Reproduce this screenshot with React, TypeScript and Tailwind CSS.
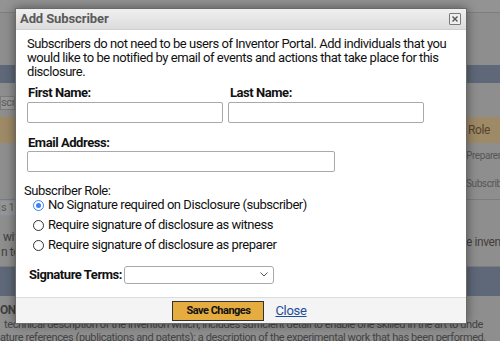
import React from "react";

const font = { fontFamily: "Roboto, 'Liberation Sans', Arial, sans-serif" };

const roles = [
  "No Signature required on Disclosure (subscriber)",
  "Require signature of disclosure as witness",
  "Require signature of disclosure as preparer",
];

const BackgroundPage: React.FC = () => (
  <div className="absolute inset-0 bg-[#8e8e8e] text-[#3f3f3f] text-[11px] tracking-[-0.4px] overflow-hidden">
    <div className="h-[13px] bg-[#939393] border-b border-[#7e7e7e]" />
    <div className="h-[18px] mt-[52px] bg-[#5e6879]" />
    <div className="mt-[13px] h-[14px] w-[15px] bg-[#999999] border border-[#7b7b7b] leading-[12px] text-[#5e5e5e] overflow-hidden">
      scri
    </div>
    <div className="mt-[7px] h-[26px] bg-[#9e8a66] flex items-center justify-end pr-[10px] text-[12px] text-[#54452c]">
      Role
    </div>
    <div className="flex flex-col items-end text-[10px] leading-[13px] text-[#575757]">
      <span className="mt-[6px] w-[34px] overflow-hidden whitespace-nowrap">Preparer</span>
      <span className="mt-[15px] w-[34px] overflow-hidden whitespace-nowrap">Subscriber</span>
    </div>
    <div className="mt-[9px] border-t border-[#7c7c7c]" />
    <div className="h-[16px] w-[16px] bg-[#979797] border border-[#8990a2] leading-[14px] text-[#5a5a5a] overflow-hidden whitespace-nowrap">
      s 1
    </div>
    <div className="flex justify-between mt-[14px] leading-[15px] text-[12px]">
      <div className="w-[15px] overflow-hidden whitespace-nowrap pl-[3px]">
        <div>with</div>
        <div className="-ml-[2px]">n to</div>
      </div>
      <div className="w-[34px] mt-[5px] overflow-hidden whitespace-nowrap self-start">e invent</div>
    </div>
    <div className="mt-[6px] border-t border-[#7c7c7c]" />
    <div className="h-[29px] bg-[#5e6879]" />
    <div className="font-bold leading-[13px] mt-[8px] text-[12px]">ON</div>
    <div className="whitespace-nowrap leading-[13px] text-[#444] pl-[4px] mt-[1px]">
      technical description of the invention which, includes sufficient detail to enable one skilled in the art to unde
    </div>
    <div className="whitespace-nowrap leading-[13px] text-[#444]">
      ature references (publications and patents): a description of the experimental work that has been performed.
    </div>
  </div>
);

const App: React.FC = () => (
  <div className="relative w-[500px] h-[341px] overflow-hidden" style={font}>
    <BackgroundPage />

    <div className="absolute left-[15px] top-[8px] w-[452px] h-[316px] bg-white border border-[#6a6a6a] shadow-[0_0_10px_rgba(0,0,0,0.45)] flex flex-col">
      <div className="h-[21px] flex items-center justify-between px-[4px] bg-gradient-to-b from-[#f0f0f0] to-[#dcdcdc] border-b border-[#cfcfcf]">
        <span className="text-[13px] font-bold text-[#5a5a5a] tracking-[-0.1px]">Add Subscriber</span>
        <button
          type="button"
          className="w-[12px] h-[12px] mr-[1px] flex items-center justify-center border border-[#7a7a7a] bg-[#efefef] rounded-[1px]"
        >
          <svg width="8" height="8" viewBox="0 0 8 8">
            <path d="M1.5 1.5 L6.5 6.5 M6.5 1.5 L1.5 6.5" stroke="#555" strokeWidth="1.4" />
          </svg>
        </button>
      </div>

      <div className="flex-1 px-[11px] pt-[7px] text-[13px] tracking-[-0.45px] text-[#111111]">
        <p className="leading-[14px]">
          Subscribers do not need to be users of Inventor Portal. Add individuals that you would like to be notified by email of events and actions that take place for this disclosure.
        </p>

        <div className="flex gap-[5px] mt-[6px]">
          <label className="flex flex-col">
            <span className="font-bold leading-[15px] pl-[1px]">First Name:</span>
            <input className="mt-[2px] w-[196px] h-[21px] border border-[#a9a9a9] rounded-[2px]" />
          </label>
          <label className="flex flex-col">
            <span className="font-bold leading-[15px] pl-[2px]">Last Name:</span>
            <input className="mt-[2px] w-[196px] h-[21px] border border-[#a9a9a9] rounded-[2px]" />
          </label>
        </div>

        <label className="flex flex-col mt-[12px]">
          <span className="font-bold leading-[15px] pl-[1px]">Email Address:</span>
          <input className="mt-[1px] w-[308px] h-[21px] border border-[#a9a9a9] rounded-[2px]" />
        </label>

        <div className="mt-[11px] -ml-[3px] leading-[15px]">Subscriber Role:</div>
        <div className="flex flex-col gap-[6px] mt-[0px] pl-[6px]">
          {roles.map((role, i) => (
            <label key={role} className="flex items-center gap-[4px] h-[14px] leading-[14px]">
              {i === 0 ? (
                <span className="w-[11px] h-[11px] rounded-full border border-[#3b82f6] flex items-center justify-center bg-white">
                  <span className="w-[5px] h-[5px] rounded-full bg-[#3b82f6]" />
                </span>
              ) : (
                <span className="w-[11px] h-[11px] rounded-full border-[1.5px] border-[#333333] bg-white" />
              )}
              <span>{role}</span>
            </label>
          ))}
        </div>

        <div className="flex items-center mt-[13px] pl-[2px]">
          <span className="font-bold">Signature Terms:</span>
          <div className="ml-[2px] w-[150px] h-[18px] border border-[#a9a9a9] rounded-[3px] flex items-center justify-end pr-[5px]">
            <svg width="8" height="5" viewBox="0 0 8 5">
              <path d="M0.5 0.5 L4 4 L7.5 0.5" fill="none" stroke="#555" strokeWidth="1" />
            </svg>
          </div>
        </div>
      </div>

      <div className="h-[26px] bg-[#f4f4f4] border-t border-[#dddddd] flex items-center justify-center gap-[11px] pr-[3px]">
        <button
          type="button"
          className="w-[92px] h-[20px] bg-[#e5ac40] border border-[#333333] text-[11px] tracking-[-0.5px] font-bold text-[#111111] leading-none"
        >
          Save Changes
        </button>
        <a href="#" className="text-[13px] tracking-[-0.3px] text-[#1f4e9c] underline">
          Close
        </a>
      </div>
    </div>
  </div>
);

export default App;
